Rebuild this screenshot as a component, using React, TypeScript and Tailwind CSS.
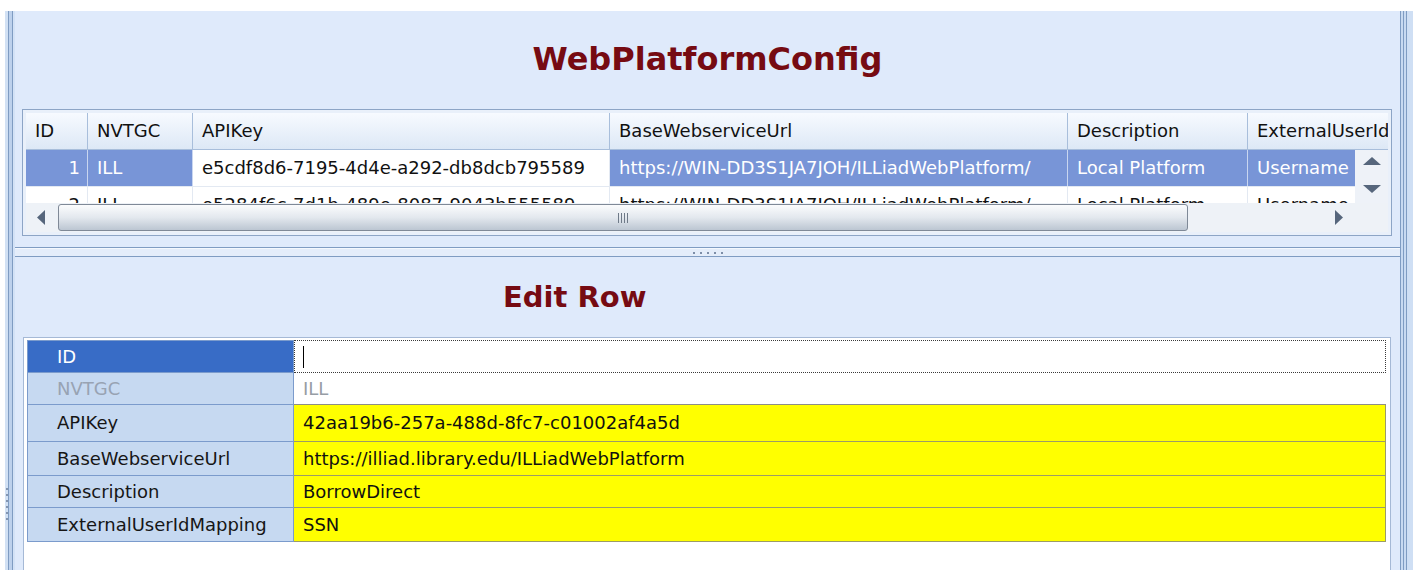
import React from "react";

type Col = { name: string; w: string };

const columns: Col[] = [
  { name: "ID", w: "w-[62px]" },
  { name: "NVTGC", w: "w-[105px]" },
  { name: "APIKey", w: "w-[417px]" },
  { name: "BaseWebserviceUrl", w: "w-[458px]" },
  { name: "Description", w: "w-[180px]" },
  { name: "ExternalUserIdMapping", w: "w-[170px]" },
];

const rows: string[][] = [
  ["1", "ILL", "e5cdf8d6-7195-4d4e-a292-db8dcb795589", "https://WIN-DD3S1JA7JOH/ILLiadWebPlatform/", "Local Platform", "Username"],
  ["2", "ILL", "e5284f6c-7d1b-489e-8087-9043b555589", "https://WIN-DD3S1JA7JOH/ILLiadWebPlatform/", "Local Platform", "Username"],
];

type GridRow = { label: string; h: string; kind: "focus" | "disabled" | "edited"; value: string };

const gridRows: GridRow[] = [
  { label: "ID", h: "h-[33px]", kind: "focus", value: "" },
  { label: "NVTGC", h: "h-[32px]", kind: "disabled", value: "ILL" },
  { label: "APIKey", h: "h-[37px]", kind: "edited", value: "42aa19b6-257a-488d-8fc7-c01002af4a5d" },
  { label: "BaseWebserviceUrl", h: "h-[34px]", kind: "edited", value: "https://illiad.library.edu/ILLiadWebPlatform" },
  { label: "Description", h: "h-[32px]", kind: "edited", value: "BorrowDirect" },
  { label: "ExternalUserIdMapping", h: "h-[34px]", kind: "edited", value: "SSN" },
];

function Triangle({ dir }: { dir: "up" | "down" | "left" | "right" }) {
  if (dir === "up")
    return (
      <svg width="18" height="8" viewBox="0 0 18 8">
        <polygon points="0,8 18,8 9,0" fill="#56667c" />
      </svg>
    );
  if (dir === "down")
    return (
      <svg width="18" height="8" viewBox="0 0 18 8">
        <polygon points="0,0 18,0 9,8" fill="#56667c" />
      </svg>
    );
  if (dir === "left")
    return (
      <svg width="8" height="15" viewBox="0 0 8 15">
        <polygon points="8,0 8,15 0,7.5" fill="#56667c" />
      </svg>
    );
  return (
    <svg width="8" height="15" viewBox="0 0 8 15">
      <polygon points="0,0 0,15 8,7.5" fill="#56667c" />
    </svg>
  );
}

function LeftFrame() {
  return (
    <div className="flex w-[15px] shrink-0">
      <div className="w-[5px] bg-white" />
      <div className="w-[3px] bg-[#d2e1f4] flex flex-col items-center pt-[477px] gap-[4px]">
        {[0, 1, 2, 3, 4, 5].map((i) => (
          <div key={i} className="w-[2px] h-[2px] bg-[#8596b0]" />
        ))}
      </div>
      <div className="w-px bg-[#7f9cc2]" />
      <div className="w-[3px] bg-[#bdd1ec]" />
      <div className="w-px bg-[#7f9cc2]" />
      <div className="w-[2px] bg-[#d3e2f6]" />
    </div>
  );
}

function RightFrame() {
  return (
    <div className="flex w-[13px] shrink-0">
      <div className="w-px bg-[#7f9cc2]" />
      <div className="w-[2px] bg-[#c8daf1]" />
      <div className="w-px bg-[#7f9cc2]" />
      <div className="w-[2px] bg-[#c8daf1]" />
      <div className="w-px bg-[#7f9cc2]" />
      <div className="w-[6px] bg-[#cfdff4]" />
    </div>
  );
}

function DataTable() {
  return (
    <div className="ml-[7px] w-[1370px] h-[127px] border border-[#8da5c6] bg-[#e9f0fa] p-[3px] flex flex-col text-[18px] leading-none">
      {/* column headers */}
      <div className="flex h-[37px] w-[1362px] overflow-hidden bg-linear-to-b from-[#f7faff] to-[#dde8f6] border-b border-[#a8bedb]">
        {columns.map((c) => (
          <div
            key={c.name}
            className={`${c.w} shrink-0 h-full flex items-center pl-[9px] border-r border-[#a8bedb] whitespace-nowrap overflow-hidden text-[#111]`}
          >
            {c.name}
          </div>
        ))}
      </div>

      {/* rows + vertical scrollbar */}
      <div className="flex h-[53px]">
        <div className="w-[1329px] overflow-hidden bg-white">
          {rows.map((r, ri) => (
            <div key={ri} className="flex h-[37px] border-b border-[#e3e9f2]">
              {r.map((v, ci) => {
                const selected = ri === 0 && ci !== 2;
                return (
                  <div
                    key={ci}
                    className={`${columns[ci].w} shrink-0 h-full flex items-center whitespace-nowrap overflow-hidden border-r ${
                      selected ? "bg-[#7895d7] text-white border-[#c9d6f0]" : "bg-white text-[#111] border-[#e3e9f2]"
                    } ${ci === 0 ? "justify-end pr-[7px]" : "pl-[9px]"}`}
                  >
                    {v}
                  </div>
                );
              })}
            </div>
          ))}
        </div>
        <div className="w-[33px] bg-[#eef2f8] flex flex-col items-center pt-[7px] gap-[20px]">
          <Triangle dir="up" />
          <Triangle dir="down" />
        </div>
      </div>

      {/* horizontal scrollbar */}
      <div className="flex h-[29px]">
        <div className="w-[1329px] bg-[#eef2f7] flex items-center">
          <div className="w-[32px] h-full flex items-center pl-[11px]">
            <Triangle dir="left" />
          </div>
          <div className="w-[1130px] h-[27px] rounded-[3px] border border-[#7f8997] bg-linear-to-b from-[#fbfcfd] via-[#e3e8ee] to-[#bcc6d2] flex items-center justify-center">
            <div className="flex gap-[2px]">
              {[0, 1, 2, 3].map((i) => (
                <div key={i} className="w-px h-[10px] bg-[#6f7a88]" />
              ))}
            </div>
          </div>
          <div className="flex-1 h-full flex items-center justify-end pr-[12px]">
            <Triangle dir="right" />
          </div>
        </div>
        <div className="w-[33px] bg-[#eef2f7]" />
      </div>
    </div>
  );
}

function EditGrid() {
  return (
    <div className="ml-[8px] w-[1368px] flex-1 border border-b-0 border-[#a5b9d6] bg-white pt-[2px] pl-[3px] text-[18px] leading-none">
      {gridRows.map((g, i) => {
        const labelCls =
          g.kind === "focus"
            ? "bg-[#386cc6] text-white"
            : g.kind === "disabled"
            ? "bg-[#c6d9f1] text-[#98a3b3]"
            : "bg-[#c6d9f1] text-[#161616]";
        let valueCls = "";
        if (g.kind === "focus") valueCls = "bg-white border border-dotted border-[#3a3a3a]";
        else if (g.kind === "disabled") valueCls = "bg-white text-[#979da5] border-b border-[#8e8e86]";
        else valueCls = "bg-[#ffff00] text-[#111] border-b border-r border-[#9c9c66]";
        return (
          <div key={g.label} className={`flex w-[1359px] ${g.h}`}>
            <div
              className={`w-[267px] shrink-0 flex items-center pl-[29px] border-l border-r border-b border-[#7b9bcc] ${
                i === 0 ? "border-t" : ""
              } ${labelCls}`}
            >
              {g.label}
            </div>
            <div className={`flex-1 flex items-center pl-[9px] whitespace-nowrap ${valueCls}`}>
              {g.kind === "focus" ? <div className="w-px h-[22px] bg-black -ml-px" /> : g.value}
            </div>
          </div>
        );
      })}
    </div>
  );
}

export default function App() {
  return (
    <div className="w-[1413px] h-[570px] overflow-hidden bg-white flex flex-col font-['DejaVu_Sans',Verdana,sans-serif] text-black">
      <div className="h-[11px] shrink-0" />
      <div className="flex flex-1 min-h-0">
        <LeftFrame />
        <main className="flex flex-col w-[1385px] shrink-0">
          {/* master list */}
          <section className="h-[237px] shrink-0 bg-[#dfeafb] border-b border-[#7f9cc2] flex flex-col">
            <div className="h-[98px] shrink-0 pt-[32px] flex justify-center">
              <h1 className="text-[32px] leading-none h-[32px] font-bold text-[#760b12]">WebPlatformConfig</h1>
            </div>
            <DataTable />
          </section>

          {/* splitter */}
          <div className="h-[8px] shrink-0 bg-[#e4edfa] border-t border-[#f4f8fe] flex items-center justify-center gap-[5px]">
            {[0, 1, 2, 3, 4].map((i) => (
              <div key={i} className="w-[2px] h-[2px] bg-[#7d8ea8]" />
            ))}
          </div>

          {/* detail editor */}
          <section className="flex-1 min-h-0 bg-[#dfeafb] border-t border-[#7f9cc2] flex flex-col">
            <div className="h-[80px] shrink-0 pt-[26px] pl-[488px]">
              <h2 className="text-[29px] leading-none h-[29px] font-bold text-[#760b12]">Edit Row</h2>
            </div>
            <EditGrid />
          </section>
        </main>
        <RightFrame />
      </div>
    </div>
  );
}
